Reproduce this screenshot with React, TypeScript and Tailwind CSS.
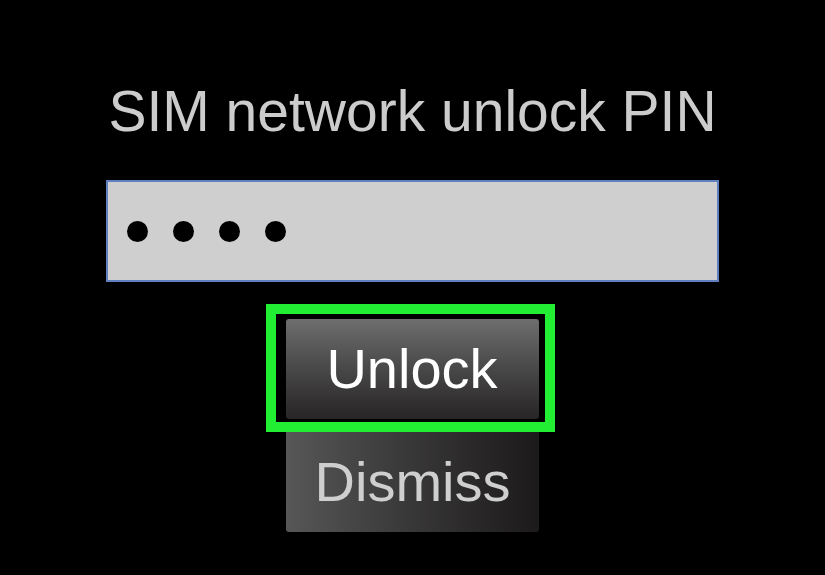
import React from 'react';

const App = () => {
  const dots = [0, 1, 2, 3];

  return (
    <div
      className="w-[825px] h-[575px] bg-black flex flex-col items-center overflow-hidden"
      style={{ fontFamily: '"Liberation Sans", Arial, sans-serif' }}
    >
      {/* Title */}
      <div className="mt-[83px] h-[57px] text-[57px] leading-none text-[#cccccc] whitespace-nowrap">
        SIM network unlock PIN
      </div>

      {/* PIN field */}
      <div className="mt-[40px] w-[613px] h-[102px] bg-[#cfcfcf] border-2 border-[#5f7fc0] flex items-center gap-[25px] pl-[19px]">
        {dots.map((d) => (
          <span key={d} className="block w-[21px] h-[21px] rounded-full bg-black" />
        ))}
      </div>

      {/* Buttons */}
      <div className="mt-[22px] flex flex-col items-center">
        <div className="ml-[-5px] border-[10px] border-[#22ee33] pt-[5px] pb-[3px] pl-[10px] pr-[6px]">
          <button className="w-[253px] h-[100px] rounded-[3px] bg-gradient-to-b from-[#6e6e6e] to-[#272525] text-white text-[56px] leading-none flex items-center justify-center">
            Unlock
          </button>
        </div>
        <button className="w-[253px] h-[100px] rounded-b-[3px] bg-gradient-to-r from-[#575757] to-[#1c1a1a] text-[#cfcfcf] text-[56px] leading-none flex items-center justify-center">
          Dismiss
        </button>
      </div>
    </div>
  );
};

export default App;
